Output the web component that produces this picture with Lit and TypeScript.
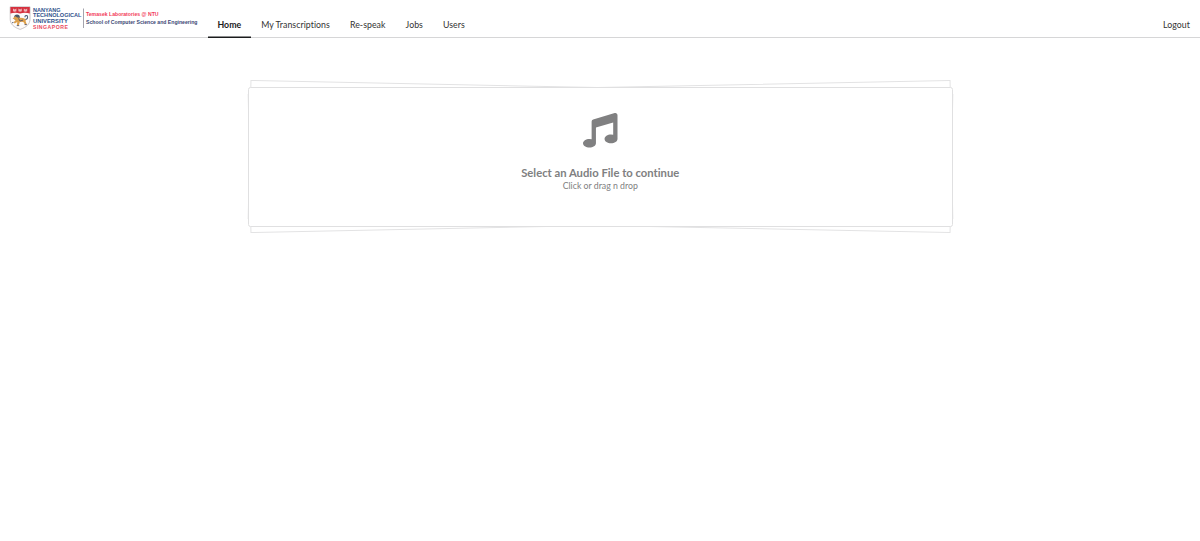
import { LitElement, html, css } from "lit";
import { customElement } from "lit/decorators.js";

@customElement("ntu-logo")
class NtuLogo extends LitElement {
  static styles = css`
    :host { display: block; width: 188px; height: 23px; }
    .logo { display: block; overflow: visible; font-family: "Liberation Sans", Arial, sans-serif; font-weight: 700; }
    .name { font-size: 5.6px; fill: #30528c; }
    .city { font-size: 5.2px; fill: #e94a60; }
    .dept { font-size: 5.5px; }
    .red { fill: #f23a58; }
    .navy { fill: #3a4674; }
  `;
  render() {
    return html`
      <svg class="logo" width="188" height="23" viewBox="10 6 188 23">
        <path d="M10.2 6.8H30V19C30 24.2 26.5 27.2 20.1 29.4C13.7 27.2 10.2 24.2 10.2 19Z" fill="#fdfbfa" stroke="#a8a1a6" stroke-width=".6" />
        <path d="M10.4 7H29.8V13.4Q25 12.2 20.1 13.4Q15.2 12.2 10.4 13.4Z" fill="#d5313f" />
        <path d="M13 8.6l1.7.8 1.7-.8v2.6l-1.7.6-1.7-.6ZM18.4 8.6l1.7.8 1.7-.8v2.6l-1.7.6-1.7-.6ZM23.8 8.6l1.7.8 1.7-.8v2.6l-1.7.6-1.7-.6Z" fill="#eeb5b8" />
        <circle cx="17" cy="17.4" r="2.9" fill="#4b5868" />
        <path d="M12.6 18.6l2.6-2.3 2 1.1 5.8.5 2.8 1.3-.1 2.5 1.2 2.7h-2l-1.5-2.5-3.5-.2-1 3.4h-2l.4-3-2.6 1.4-1-1.2 2-2.4Z" fill="#dda04c" />
        <path d="M18.5 18.4l1.5 2.7 3-1M13.5 22.4l-1.5.4M16.8 25.6h2.4M24.6 24.6h2.2" fill="none" stroke="#515366" stroke-width=".9" />
        <path d="M25.5 19.5q3-.7 1.7-3.8q-2.4-.7-2.2 1.5" fill="none" stroke="#4f6078" stroke-width="1.1" />
        <text class="name" x="33" y="12" textLength="27.5" lengthAdjust="spacingAndGlyphs">NANYANG</text>
        <text class="name" x="33" y="17.4" textLength="48.5" lengthAdjust="spacingAndGlyphs">TECHNOLOGICAL</text>
        <text class="name" x="33" y="22.6" textLength="35" lengthAdjust="spacingAndGlyphs">UNIVERSITY</text>
        <text class="city" x="33" y="28.5" textLength="35">SINGAPORE</text>
        <path d="M83.5 8.5V28" stroke="#8d8d98" stroke-width=".8" />
        <text class="dept red" x="86" y="16.3" textLength="72.5" lengthAdjust="spacingAndGlyphs">Temasek Laboratories @ NTU</text>
        <text class="dept navy" x="86" y="23.8" textLength="111.5" lengthAdjust="spacingAndGlyphs">School of Computer Science and Engineering</text>
      </svg>
    `;
  }
}

@customElement("app-root")
class AppRoot extends LitElement {
  static styles = css`
    :host { display: block; min-height: 541px; background: #fff; font-family: Lato, sans-serif; font-size: 8.75px; font-variant-ligatures: none; color: #333; }
    .bar { box-sizing: border-box; height: 38px; display: flex; align-items: stretch; border-bottom: 1px solid #d6d6d7; }
    .brand { padding: 6px 9.5px 0 10px; }
    .item { box-sizing: border-box; height: 38px; padding: 19px 10px 0; line-height: 12px; white-space: nowrap; }
    .item + .item { letter-spacing: 0.055px; }
    .active { font-weight: 700; box-shadow: inset 0 -1.5px #1b1c1d; color: #1c1c1c; }
    .logout { margin-left: auto; }
    .main { padding: 49px 247.5px 0 248px; }
    .pile { position: relative; z-index: 0; height: 140px; }
    .pile::before, .pile::after { content: ""; position: absolute; inset: 0 1px 1px; box-sizing: border-box; z-index: -1; border: 1px solid #e3e3e4; background: #fff; }
    .pile::before { transform: rotate(-1.15deg); }
    .pile::after { transform: rotate(1.15deg); }
    .drop { box-sizing: border-box; height: 140px; display: flex; flex-direction: column; align-items: center; border: 1px solid #e0e0e1; border-radius: 2.5px; background: #fff; color: #808081; padding-top: 25px; }
    .note { width: 34.5px; height: 34.5px; display: block; fill: #808081; }
    .title { margin-top: 18.5px; font-weight: 700; font-size: 11.25px; line-height: 14px; margin-bottom: -0.5px; }
    .hint { line-height: 11px; }
  `;
  render() {
    return html`
      <nav class="bar">
        <div class="brand"><ntu-logo></ntu-logo></div>
        <a class="item active">Home</a>
        <a class="item">My Transcriptions</a>
        <a class="item">Re-speak</a>
        <a class="item">Jobs</a>
        <a class="item">Users</a>
        <a class="item logout">Logout</a>
      </nav>
      <main class="main">
        <div class="pile">
          <section class="drop">
            <svg class="note" viewBox="0 0 512 512">
              <path d="M470.38 1.51L150.41 96A32 32 0 0 0 128 126.51v261.41A139 139 0 0 0 96 384c-53 0-96 28.66-96 64s43 64 96 64 96-28.66 96-64V214.32l256-75v184.61a138.4 138.4 0 0 0-32-3.93c-53 0-96 28.66-96 64s43 64 96 64 96-28.65 96-64V32a32 32 0 0 0-41.62-30.49z" />
            </svg>
            <div class="title">Select an Audio File to continue</div>
            <div class="hint">Click or drag n drop</div>
          </section>
        </div>
      </main>
    `;
  }
}
